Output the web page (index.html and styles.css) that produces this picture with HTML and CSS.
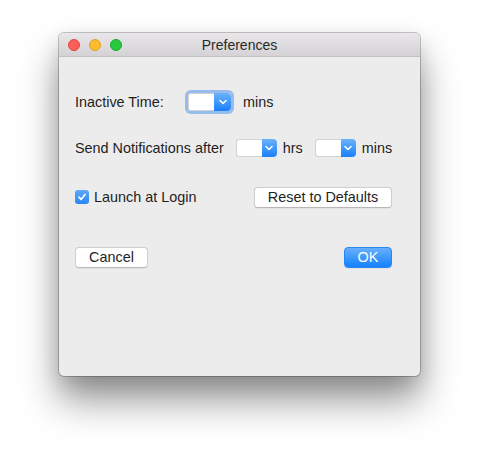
FILE: index.html
```html
<!DOCTYPE html>
<html>
<head>
  <title>Preferences</title>
  <link rel="stylesheet" href="styles.css">
</head>
<body>

<div class="window">
  <!-- title bar -->
  <div class="titlebar">
    <div class="lights">
      <span class="light red"></span>
      <span class="light yellow"></span>
      <span class="light green"></span>
    </div>
    <div class="title">Preferences</div>
  </div>

  <div class="content">
    <div class="row row-inactive">
      <span class="label">Inactive Time:</span>
      <div class="combo focused">
        <span class="combo-field"></span>
        <span class="combo-arrow">
          <svg width="8" height="6" viewBox="0 0 8 6"><path d="M1 1.5 L4 4.5 L7 1.5" fill="none" stroke="#fff" stroke-width="1.5" stroke-linecap="round" stroke-linejoin="round"/></svg>
        </span>
      </div>
      <span class="unit">mins</span>
    </div>

    <div class="row row-notify">
      <span class="label">Send Notifications after</span>
      <div class="combo">
        <span class="combo-field"></span>
        <span class="combo-arrow">
          <svg width="8" height="6" viewBox="0 0 8 6"><path d="M1 1.5 L4 4.5 L7 1.5" fill="none" stroke="#fff" stroke-width="1.5" stroke-linecap="round" stroke-linejoin="round"/></svg>
        </span>
      </div>
      <span class="unit unit-hrs">hrs</span>
      <div class="combo">
        <span class="combo-field"></span>
        <span class="combo-arrow">
          <svg width="8" height="6" viewBox="0 0 8 6"><path d="M1 1.5 L4 4.5 L7 1.5" fill="none" stroke="#fff" stroke-width="1.5" stroke-linecap="round" stroke-linejoin="round"/></svg>
        </span>
      </div>
      <span class="unit">mins</span>
    </div>

    <div class="row row-login">
      <label class="check">
        <span class="box">
          <svg width="10" height="10" viewBox="0 0 10 10"><path d="M2 5.2 L4.1 7.4 L8 2.4" fill="none" stroke="#fff" stroke-width="1.7" stroke-linecap="round" stroke-linejoin="round"/></svg>
        </span>
        Launch at Login
      </label>
      <button class="btn btn-reset">Reset to Defaults</button>
    </div>

    <div class="row row-actions">
      <button class="btn btn-cancel">Cancel</button>
      <button class="btn btn-ok">OK</button>
    </div>
  </div>
</div>

</body>
</html>
```

FILE: styles.css
```css
html, body {
  min-height: 461px;
}

body {
  margin: 0;
  padding: 33px 0 0 59px;
  box-sizing: border-box;
  background: #fff;
  font-family: "Liberation Sans", Arial, sans-serif;
  font-size: 14.4px;
  color: #1e1e1e;
}

.window {
  width: 361px;
  height: 343px;
  background: #ececec;
  border-radius: 5px;
  box-shadow: 0 0 0 1px rgba(0,0,0,0.22), 0 24px 38px rgba(0,0,0,0.42), 0 8px 20px rgba(0,0,0,0.12);
  overflow: hidden;
}

.titlebar {
  height: 23px;
  background: linear-gradient(#e9e7e9, #d4d2d4);
  border-bottom: 1px solid #c2c0c2;
  display: flex;
  align-items: center;
}

.lights {
  display: flex;
  gap: 9px;
  padding-left: 9px;
}

.light {
  width: 12px;
  height: 12px;
  border-radius: 50%;
  box-sizing: border-box;
}

.red { background: #fc5f57; border: 1px solid #e0443e; }
.yellow { background: #fdbc2e; border: 1px solid #dea123; }
.green { background: #28c840; border: 1px solid #1aab29; }

.title {
  flex: 1;
  text-align: center;
  margin-left: -63px;
  font-size: 14px;
  color: #2a2a2a;
}

.content {
  padding: 32px 20px 0 16px;
}

.row {
  display: flex;
  align-items: center;
  height: 26px;
  white-space: nowrap;
}

.row > * { flex-shrink: 0; }

.row-notify { margin-top: 20px; }
.row-login { margin-top: 23px; justify-content: space-between; padding-right: 8px; }
.row-actions { margin-top: 34px; justify-content: space-between; padding-right: 8px; }

.row-inactive .label { width: 113px; }
.row-inactive .unit { margin-left: 12px; }

.unit { margin-left: 6px; }
.row-notify .label { margin-right: 12px; }
.row-notify .unit-hrs { margin-right: 12px; }

.combo {
  display: flex;
  height: 18px;
  border-radius: 4px;
}

.combo.focused {
  box-shadow: 0 0 0 3px rgba(80,150,240,0.55);
  border-radius: 3px;
}

.combo-field {
  width: 26px;
  background: #fff;
  border: 1px solid #d2d2d2;
  border-right: none;
  border-radius: 3px 0 0 3px;
  box-sizing: border-box;
}

.combo-arrow {
  width: 15px;
  background: linear-gradient(#6ab2fa, #1a80fb);
  border-radius: 0 4px 4px 0;
  display: flex;
  align-items: center;
  justify-content: center;
}

.focused .combo-arrow { width: 17px; }

.check {
  display: flex;
  align-items: center;
  gap: 5px;
}

.box {
  width: 14px;
  height: 14px;
  border-radius: 3px;
  background: linear-gradient(#5ea9f8, #2a86f3);
  display: flex;
  align-items: center;
  justify-content: center;
}

.btn {
  font-family: inherit;
  font-size: 14.4px;
  height: 21px;
  padding: 0;
  border-radius: 4px;
  background: #fff;
  color: #1e1e1e;
  border: 1px solid #cdcdcd;
  border-bottom-color: #b7b7b7;
  box-shadow: 0 0.5px 0.5px rgba(0,0,0,0.08);
}

.btn-reset { width: 138px; }
.btn-cancel { width: 73px; }

.btn-ok {
  width: 48px;
  color: #fff;
  background: linear-gradient(#68b0fa, #1481fc);
  border: 1px solid #2b86f0;
}
```
